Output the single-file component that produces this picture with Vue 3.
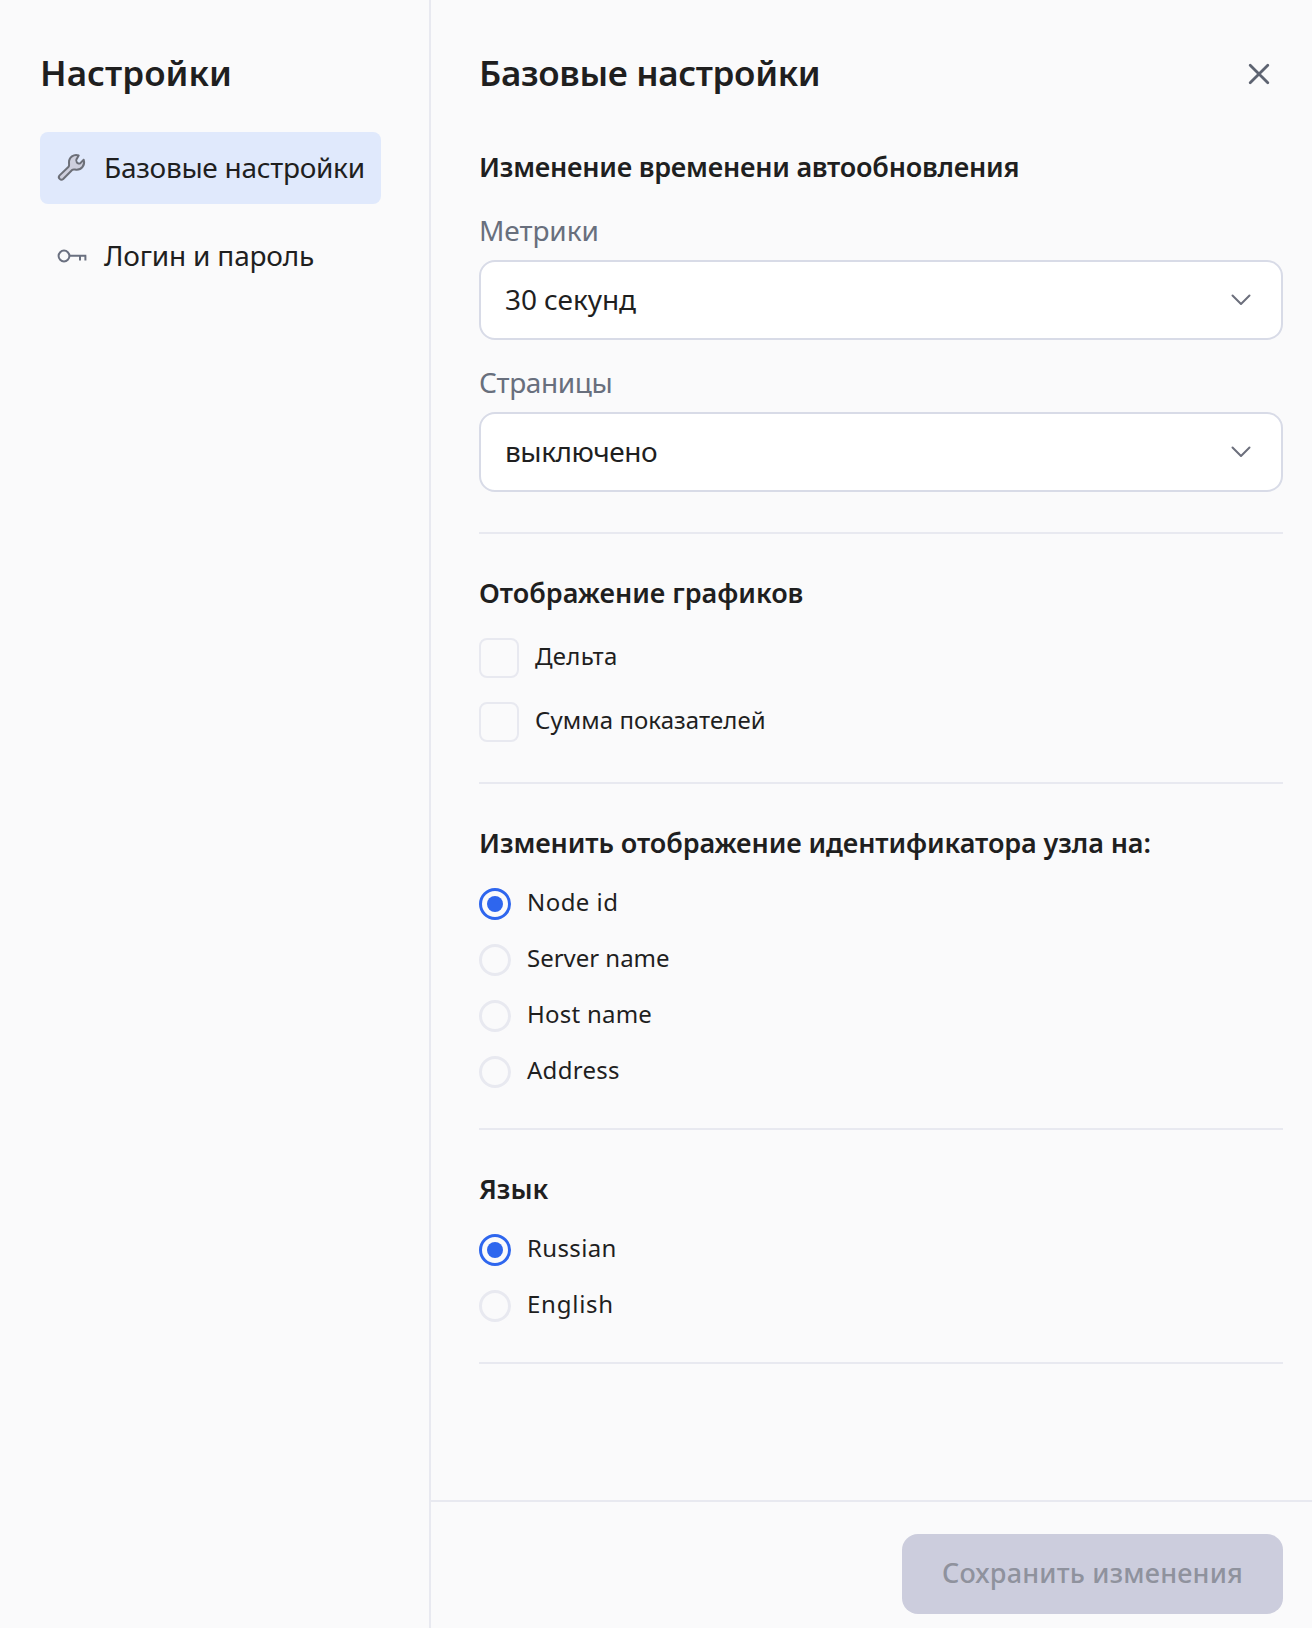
<script setup>
import { ref } from 'vue'

const nodeId = ref('Node id')
const language = ref('Russian')

const selects = [
  { label: 'Метрики', labelTrack: -0.06, value: '30 секунд', track: -0.07 },
  { label: 'Страницы', labelTrack: -0.39, value: 'выключено', track: -0.44 },
]
const charts = [
  { text: 'Дельта', track: 0.28 },
  { text: 'Сумма показателей', track: 0.06 },
]
const nodeOptions = [
  { text: 'Node id', track: 0.45 },
  { text: 'Server name', track: -0.02 },
  { text: 'Host name', track: 0.24 },
  { text: 'Address', track: 0.28 },
]
const languages = [
  { text: 'Russian', track: 0.36 },
  { text: 'English', track: 0.75 },
]
const tracking = (n) => ({ letterSpacing: n + 'px' })
</script>

<template>
  <div class="settings">
    <aside class="sidebar">
      <h1 class="title side-title">Настройки</h1>
      <nav class="nav">
        <a class="nav-item active">
          <svg class="nav-icon" viewBox="0 0 32 32">
            <path class="wrench" d="M22.7 3.5C18 1.7 12.7 5.2 13 10.8C13.1 12.6 13.4 13.9 12.6 14.7L3.6 23.4C1.4 25.7 4.8 29.2 7.2 27L16.1 18C17 17.1 18.2 17.5 20 17.7C25.6 18.1 29.3 13 27.7 7.8L24.6 10.9C23.3 12 21.7 11.5 20.8 10.3C19.9 9.1 19.9 7.9 20.7 6.9Z" />
          </svg>
          <span class="nav-text main-link">Базовые настройки</span>
        </a>
        <a class="nav-item">
          <svg class="nav-icon" viewBox="0 0 32 32">
            <circle class="key" cx="8" cy="16" r="5.4" />
            <path class="key" d="M13.4 15.8H30.3M24 15.8V20.6M29.4 15.8V20.6" />
          </svg>
          <span class="nav-text login-link">Логин и пароль</span>
        </a>
      </nav>
    </aside>

    <main class="panel">
      <div class="content">
        <header class="header">
          <h2 class="title panel-title">Базовые настройки</h2>
          <button class="close" aria-label="Закрыть">
            <svg viewBox="0 0 24 24"><path d="M3.2 3.2L20.8 20.8M20.8 3.2L3.2 20.8" /></svg>
          </button>
        </header>

        <section class="section first">
          <h3 class="heading refresh">Изменение временени автообновления</h3>
          <div v-for="s in selects" :key="s.label" class="field">
            <label class="label" :style="tracking(s.labelTrack)">{{ s.label }}</label>
            <div class="select">
              <span class="select-text" :style="tracking(s.track)">{{ s.value }}</span>
              <svg class="chevron" viewBox="0 0 20 12"><path d="M1.5 1.5L10 10L18.5 1.5" /></svg>
            </div>
          </div>
        </section>

        <section class="section">
          <h3 class="heading charts">Отображение графиков</h3>
          <div class="options">
            <label v-for="c in charts" :key="c.text" class="option">
              <span class="checkbox"></span>
              <span class="option-text" :style="tracking(c.track)">{{ c.text }}</span>
            </label>
          </div>
        </section>

        <section class="section">
          <h3 class="heading node">Изменить отображение идентификатора узла на:</h3>
          <div class="options">
            <label v-for="o in nodeOptions" :key="o.text" class="option" @click="nodeId = o.text">
              <span class="radio" :class="{ checked: nodeId === o.text }"></span>
              <span class="option-text" :style="tracking(o.track)">{{ o.text }}</span>
            </label>
          </div>
        </section>

        <section class="section">
          <h3 class="heading lang">Язык</h3>
          <div class="options">
            <label v-for="o in languages" :key="o.text" class="option" @click="language = o.text">
              <span class="radio" :class="{ checked: language === o.text }"></span>
              <span class="option-text" :style="tracking(o.track)">{{ o.text }}</span>
            </label>
          </div>
        </section>
      </div>

      <footer class="footer">
        <button class="save" disabled>Сохранить изменения</button>
      </footer>
    </main>
  </div>
</template>

<style>
body {
  margin: 0;
  background: #fafafb;
}
</style>

<style scoped>
.settings {
  display: flex;
  height: 1628px;
  overflow: hidden;
  background: #fafafb;
  color: #1f1f1f;
  font-family: "Noto Sans", sans-serif;
}
.settings * {
  box-sizing: border-box;
}
h1, h2, h3 {
  margin: 0;
  font-weight: 600;
}
svg {
  display: block;
  fill: none;
}
.sidebar {
  flex: none;
  width: 431px;
  padding: 49px 48px 0 40px;
  border-right: 2px solid #e8e9f0;
}
.title {
  font-size: 35px;
  line-height: 48px;
  white-space: nowrap;
}
.side-title {
  letter-spacing: 0.05px;
}
.panel-title {
  letter-spacing: -0.34px;
}
.nav {
  display: flex;
  flex-direction: column;
  gap: 16px;
  margin-top: 35px;
}
.nav-item {
  display: flex;
  align-items: center;
  gap: 16px;
  height: 72px;
  padding: 0 16px;
  border-radius: 8px;
  white-space: nowrap;
}
.nav-item.active {
  background: #e0e9fc;
}
.nav-icon {
  flex: none;
  width: 32px;
  height: 32px;
}
.nav-text {
  padding-bottom: 3px;
  font-size: 28px;
  line-height: 32px;
}
.main-link {
  letter-spacing: -0.29px;
}
.login-link {
  letter-spacing: -0.2px;
}
.wrench {
  fill: #cecfdd;
  stroke: #6c6f78;
  stroke-width: 2;
  stroke-linejoin: round;
}
.key {
  stroke: #6a7080;
  stroke-width: 2;
}
.panel {
  display: flex;
  flex: 1;
  flex-direction: column;
  min-width: 0;
}
.content {
  flex: 1;
  padding: 49px 29px 0 48px;
}
.header {
  display: flex;
  align-items: center;
  justify-content: space-between;
  padding-right: 12px;
}
.close {
  padding: 0;
  border: 0;
  background: none;
}
.close svg {
  width: 24px;
  height: 24px;
  margin-top: 2px;
  stroke: #5d6371;
  stroke-width: 2.8;
  stroke-linecap: round;
}
.section {
  padding: 42px 0 40px;
  border-bottom: 2px solid #e8e9f0;
}
.section.first {
  padding-top: 53px;
}
.heading {
  font-size: 27px;
  line-height: 34px;
  white-space: nowrap;
}
.refresh {
  letter-spacing: -0.24px;
  margin-bottom: 30px;
}
.charts {
  letter-spacing: -0.02px;
}
.node {
  letter-spacing: -0.1px;
}
.lang {
  letter-spacing: -0.1px;
}
.field + .field {
  margin-top: 26px;
}
.label {
  display: block;
  margin-bottom: 14px;
  color: #686f7d;
  font-size: 28px;
  line-height: 32px;
}
.select {
  display: flex;
  align-items: center;
  justify-content: space-between;
  height: 80px;
  padding: 0 30px 0 24px;
  border: 2px solid #d8dbe7;
  border-radius: 16px;
  background: #fff;
}
.select-text {
  padding-bottom: 3px;
  font-size: 28px;
  line-height: 32px;
}
.chevron {
  width: 20px;
  height: 12px;
  stroke: #6c6f7c;
  stroke-width: 2;
  stroke-linecap: round;
  stroke-linejoin: round;
}
.options {
  display: flex;
  flex-direction: column;
  gap: 24px;
  margin-top: 28px;
}
.option {
  display: flex;
  align-items: center;
  gap: 16px;
}
.checkbox {
  width: 40px;
  height: 40px;
  border: 2px solid #e8e9f0;
  border-radius: 8px;
}
.radio {
  display: flex;
  align-items: center;
  justify-content: center;
  width: 32px;
  height: 32px;
  border: 3px solid #e8e9f0;
  border-radius: 50%;
}
.radio.checked {
  border-color: #2e66ee;
}
.radio.checked::after {
  content: "";
  width: 16px;
  height: 16px;
  border-radius: 50%;
  background: #2e66ee;
}
.option-text {
  padding-bottom: 4px;
  font-size: 24px;
  line-height: 28px;
}
.footer {
  display: flex;
  justify-content: flex-end;
  height: 128px;
  padding: 32px 29px 0 0;
  border-top: 2px solid #e8e9f0;
}
.save {
  width: 381px;
  height: 80px;
  padding: 0 0 2px;
  border: 0;
  border-radius: 16px;
  background: #cccddd;
  color: #8f929d;
  font: 500 27px/32px "Noto Sans", sans-serif;
  letter-spacing: 0.2px;
}
</style>
